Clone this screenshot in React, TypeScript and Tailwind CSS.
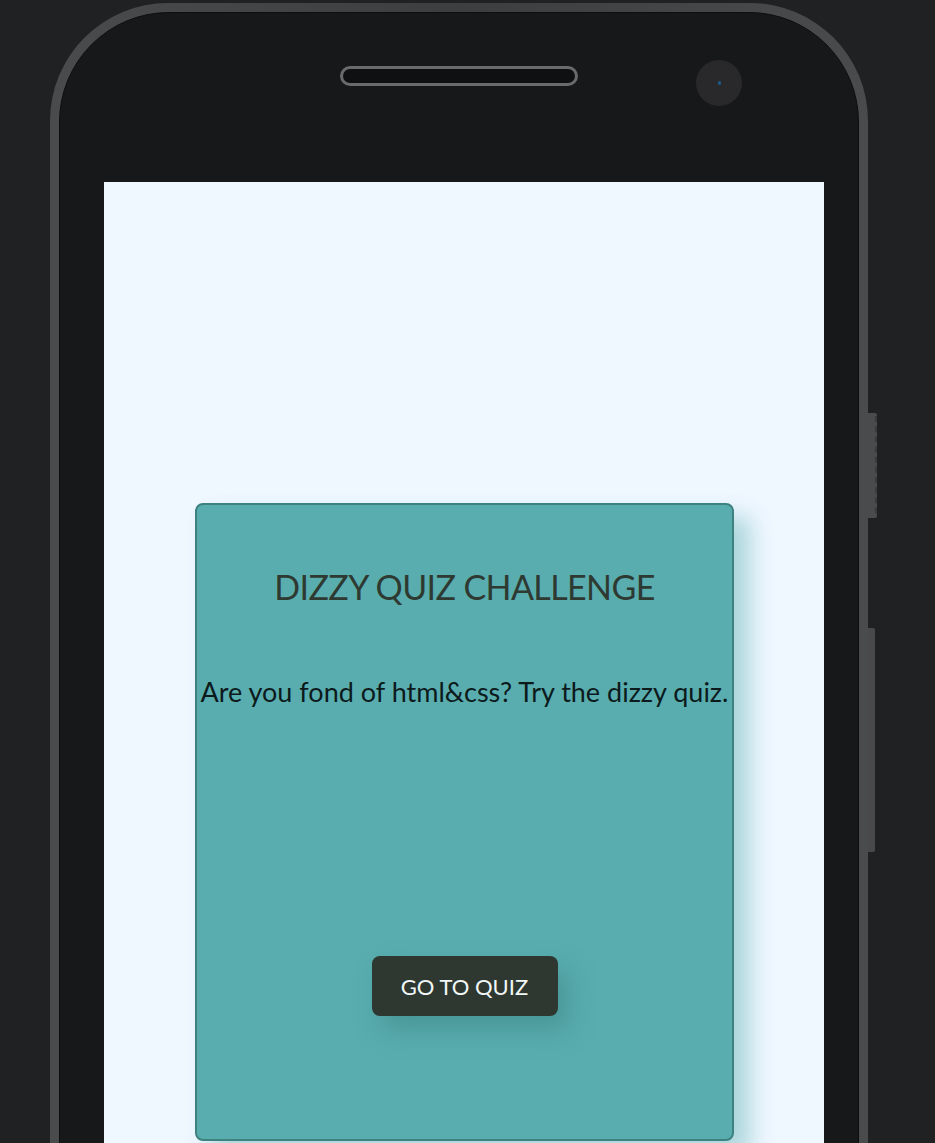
import React from 'react';

const PhoneFrame: React.FC<{ children: React.ReactNode }> = ({ children }) => (
  <div className="relative ml-[50px] mt-[3px] w-[818px]">
    {/* side buttons sticking out of the frame */}
    <div className="absolute right-[-9px] top-[410px] h-[105px] w-[9px] rounded-r-[2px] border-r-2 border-dashed border-[#3a3b3d] bg-[#4a4b4d]" />
    <div className="absolute right-[-7px] top-[625px] h-[224px] w-[7px] rounded-r-[2px] bg-[#49494b]" />
    <div className="rounded-t-[118px] bg-gradient-to-r from-[#4a4b4d] via-[#3d3e40] to-[#4a4b4d] p-[9px] pb-0">
      <div className="rounded-t-[110px] border border-[#0d0e10] bg-[#17181a] px-[44px] pt-[47px]">
        <div className="flex items-start gap-[118px] pl-[236px]">
          <div className="mt-[6px] h-[20px] w-[238px] rounded-full border-[3px] border-[#6a6a6c] bg-[#0f1012]" />
          <div className="flex h-[46px] w-[46px] items-center justify-center rounded-full bg-[#29292c]">
            <div className="h-[4px] w-[3px] rounded-full bg-[#1a5a8a]" />
          </div>
        </div>
        <div className="mt-[76px]">{children}</div>
      </div>
    </div>
  </div>
);

export default function App() {
  return (
    <div
      className="h-[1143px] w-[935px] overflow-hidden bg-[#202123]"
      style={{ fontFamily: 'Lato, "Liberation Sans", sans-serif' }}
    >
      <PhoneFrame>
        <div className="h-[980px] w-[720px] bg-[#eff7ff] pl-[91px] pr-[90px] pt-[321px]">
          <div className="flex h-[638px] flex-col items-center rounded-[8px] border-2 border-[#3e8280] bg-[#59adaf] shadow-[16px_14px_22px_rgba(89,173,175,0.45)]">
            <h1 className="mt-[60px] text-[34px] font-normal leading-[44px] tracking-[-0.6px] text-[#2e3a31]">
              DIZZY QUIZ CHALLENGE
            </h1>
            <p className="mt-[66px] whitespace-nowrap text-[27px] leading-[34px] text-[#0c1a1c]">
              Are you fond of html&amp;css? Try the dizzy quiz.
            </p>
            <button className="mt-[247px] h-[60px] w-[186px] rounded-[8px] bg-[#2e3830] text-[22px] text-[#f2f7f7] shadow-[10px_14px_24px_rgba(60,130,130,0.5)]">
              GO TO QUIZ
            </button>
          </div>
        </div>
      </PhoneFrame>
    </div>
  );
}
